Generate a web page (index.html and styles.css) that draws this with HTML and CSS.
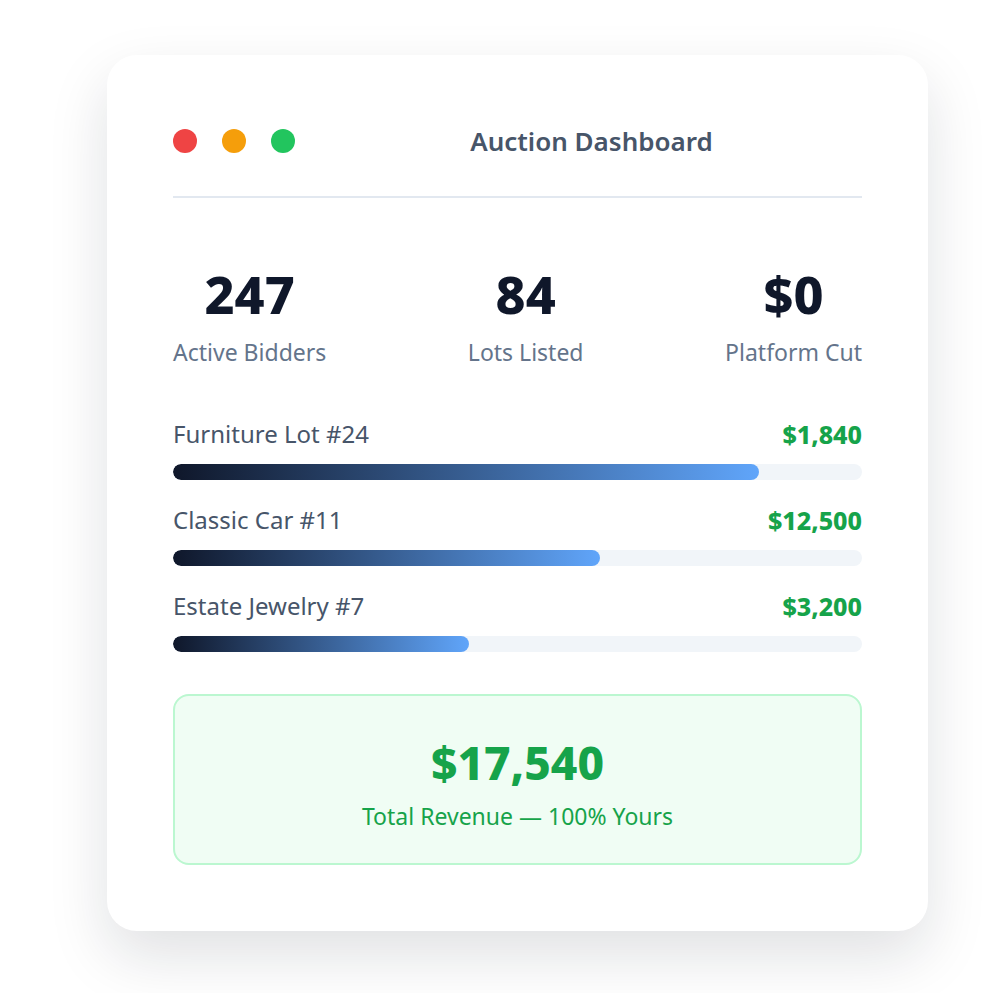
FILE: index.html
```html
<!DOCTYPE html>
<html lang="en">
<head>
    <meta charset="UTF-8">
    <meta name="viewport" content="width=device-width, initial-scale=1.0">
    <title>Auction Dashboard</title>
    <link rel="stylesheet" href="styles.css">
</head>
<body>
    <div class="card">
        <div class="card-header">
            <div class="dots">
                <span class="dot dot-red"></span>
                <span class="dot dot-yellow"></span>
                <span class="dot dot-green"></span>
            </div>
            <div class="title">Auction Dashboard</div>
        </div>

        <div class="stats">
            <div class="stat">
                <div class="stat-value">247</div>
                <div class="stat-label">Active Bidders</div>
            </div>
            <div class="stat">
                <div class="stat-value">84</div>
                <div class="stat-label">Lots Listed</div>
            </div>
            <div class="stat">
                <div class="stat-value">$0</div>
                <div class="stat-label">Platform Cut</div>
            </div>
        </div>

        <div class="lots">
            <div class="lot">
                <div class="lot-top">
                    <span class="lot-name">Furniture Lot #24</span>
                    <span class="lot-price">$1,840</span>
                </div>
                <div class="bar"><div class="bar-fill" style="width: 85%"></div></div>
            </div>
            <div class="lot">
                <div class="lot-top">
                    <span class="lot-name">Classic Car #11</span>
                    <span class="lot-price">$12,500</span>
                </div>
                <div class="bar"><div class="bar-fill" style="width: 62%"></div></div>
            </div>
            <div class="lot">
                <div class="lot-top">
                    <span class="lot-name">Estate Jewelry #7</span>
                    <span class="lot-price">$3,200</span>
                </div>
                <div class="bar"><div class="bar-fill" style="width: 43%"></div></div>
            </div>
        </div>

        <div class="total">
            <div class="total-value">$17,540</div>
            <div class="total-label">Total Revenue — 100% Yours</div>
        </div>
    </div>
</body>
</html>
```

FILE: styles.css
```css
body {
    margin: 0;
    padding: 55px 0 62px 107px;
    background-color: #fff;
    font-family: "Noto Sans", "Open Sans", sans-serif;
}
.card {
    width: 821px;
    box-sizing: border-box;
    padding: 68px 66px 66px;
    background-color: #fff;
    border-radius: 30px;
    box-shadow: 0 25px 60px rgba(15, 23, 42, 0.13);
}
.card-header {
    display: flex;
    align-items: center;
    gap: 26px;
    padding-bottom: 37px;
    border-bottom: 2px solid #e2e8f0;
}
.dots {
    display: flex;
    gap: 25px;
}
.dot {
    width: 24px;
    height: 24px;
    border-radius: 50%;
}
.dot-red { background-color: #ef4444; }
.dot-yellow { background-color: #f59e0b; }
.dot-green { background-color: #22c55e; }
.title {
    flex: 1;
    text-align: center;
    font-size: 26px;
    line-height: 36px;
    font-weight: 600;
    color: #475569;
}
.stats {
    display: flex;
    justify-content: space-between;
    margin-top: 67px;
}
.stat {
    text-align: center;
}
.stat-value {
    font-size: 52px;
    line-height: 58px;
    font-weight: 800;
    color: #0f172a;
}
.stat-label {
    margin-top: 14px;
    font-size: 23px;
    line-height: 30px;
    color: #64748b;
}
.lots {
    margin-top: 52px;
}
.lot {
    margin-bottom: 25px;
}
.lot-top {
    display: flex;
    justify-content: space-between;
    font-size: 24px;
    line-height: 30px;
}
.lot-name {
    color: #475569;
}
.lot-price {
    font-size: 25px;
    font-weight: 800;
    color: #16a34a;
}
.bar {
    margin-top: 15px;
    height: 16px;
    border-radius: 8px;
    background-color: #f1f5f9;
    overflow: hidden;
}
.bar-fill {
    height: 100%;
    border-radius: 8px;
    background: linear-gradient(90deg, #0f172a, #60a5fa);
}
.total {
    margin-top: 42px;
    padding: 40px 0 32px;
    text-align: center;
    background-color: #f0fdf4;
    border: 2px solid #bbf7d0;
    border-radius: 16px;
}
.total-value {
    font-size: 46px;
    line-height: 53px;
    font-weight: 800;
    color: #16a34a;
}
.total-label {
    margin-top: 12px;
    font-size: 23px;
    line-height: 30px;
    color: #16a34a;
}
```
